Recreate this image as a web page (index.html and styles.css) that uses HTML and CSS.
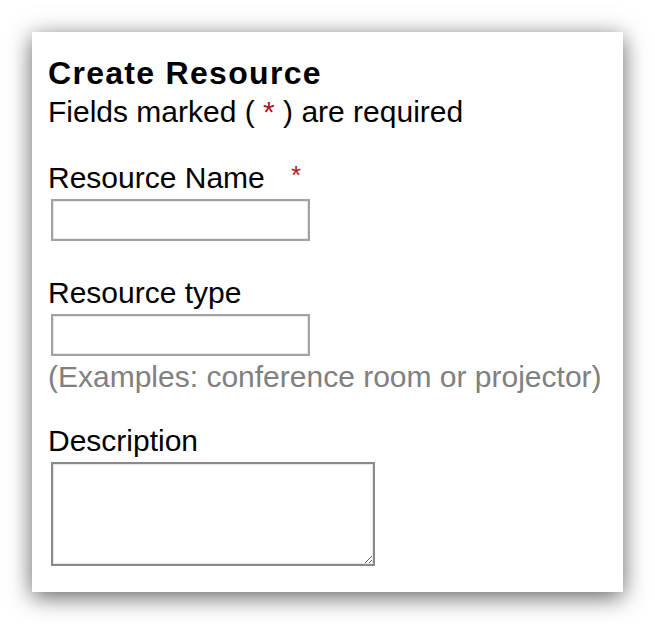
FILE: index.html
```html
<!DOCTYPE html>
<html lang="en">
  <head>
    <title>Create Resource</title>
    <meta charset="UTF-8" />
    <meta name="viewport" content="width=device-width" />
    <link rel="stylesheet" href="styles.css">
  </head>
  <body>
    <main class="card">
      <h2 class="title">Create Resource</h2>
      <p class="note">Fields marked ( <span class="req">*</span> ) are required</p>

      <div class="field field-first">
        <label for="resName">Resource Name <span class="req req-label">*</span></label>
        <input type="text" id="resName" class="text-input" />
      </div>

      <div class="field">
        <label for="resType">Resource type</label>
        <input type="text" id="resType" class="text-input" />
        <div class="hint">(Examples: conference room or projector)</div>
      </div>

      <div class="field field-last">
        <label for="resDesc">Description</label>
        <textarea id="resDesc" class="text-area"></textarea>
      </div>
    </main>
  </body>
</html>
```

FILE: styles.css
```css
* {
  box-sizing: border-box;
}

body {
  margin: 0;
  padding: 32px;
  font-family: "Liberation Sans", Arial, sans-serif;
  color: #000;
  background-color: white;
}

.card {
  background: white;
  padding: 24px 16px 26px 16px;
  box-shadow: 0 5px 22px rgba(0, 0, 0, 0.62);
}

.title {
  margin: 0;
  font-size: 32px;
  line-height: 34px;
  font-weight: bold;
  letter-spacing: 1.3px;
}

.note {
  margin: 5px 0 0 0;
  font-size: 30px;
  line-height: 34px;
}

.req {
  color: #b0161e;
}

.req-label {
  margin-left: 18px;
  font-size: 26px;
  vertical-align: top;
  position: relative;
  top: -3px;
}

.field {
  margin-top: 35px;
}

.field-first {
  margin-top: 32px;
}

.field-last {
  margin-top: 30px;
}

.field label {
  display: block;
  font-size: 30px;
  line-height: 34px;
}

.text-input {
  display: block;
  margin: 4px 0 0 3px;
  width: 259px;
  height: 42px;
  border: 2px solid #a2a2a2;
  box-shadow: inset 0 0 0 1px #e6e6e6;
  background: white;
  font-size: 20px;
}

.hint {
  margin-top: 4px;
  font-size: 30px;
  line-height: 34px;
  color: #808080;
}

.text-area {
  display: block;
  margin: 4px 0 0 3px;
  width: 324px;
  height: 104px;
  border: 2px solid #8a8a8a;
  box-shadow: inset 0 0 0 1px #e6e6e6;
  background: white;
}
```
